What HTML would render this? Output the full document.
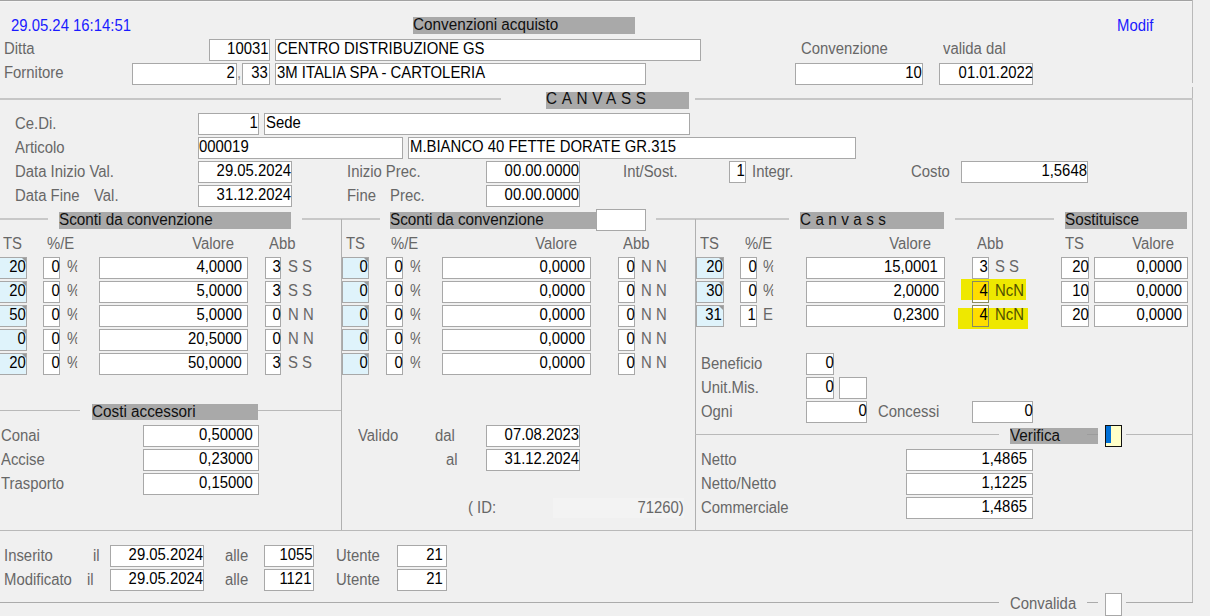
<!DOCTYPE html>
<html><head><meta charset="utf-8"><style>
html,body{margin:0;padding:0;width:1210px;height:616px;overflow:hidden;background:#f0f0f0}
body{position:relative;font-family:"Liberation Sans",sans-serif;font-size:16px}
.t{position:absolute;white-space:pre;line-height:17px;height:17px;transform:scale(0.93,1.0);transform-origin:0 0}
.r{transform-origin:100% 0}
.l{position:absolute}
.b{position:absolute;box-sizing:border-box;border:1px solid #a8a8a8}
.tri{position:absolute;width:0;height:0;border-top:4px solid #9a9a9a;border-left:4px solid transparent}
</style></head><body>
<div id="w" style="position:absolute;left:0;top:0;width:1210px;height:616px">
<div class="l" style="left:0px;top:0px;width:1193px;height:1px;background:#a2a2a2"></div>
<div class="l" style="left:0px;top:1px;width:1192px;height:1px;background:#f6f6f6"></div>
<div class="l" style="left:1192px;top:0px;width:1px;height:83px;background:#b9b9b9"></div>
<div class="l" style="left:1192px;top:87px;width:1px;height:516px;background:#b9b9b9"></div>
<div class="t" style="left:11px;top:17px;color:#1a1aff;">29.05.24 16:14:51</div>
<div class="t" style="left:1117px;top:17px;color:#1a1aff;">Modif</div>
<div class="l" style="left:413px;top:17px;width:222px;height:17px;background:#a9a9a9"></div>
<div class="t" style="left:413px;top:16px;color:#101010;transform:scale(0.955,1);">Convenzioni acquisto</div>
<div class="t" style="left:4px;top:40px;color:#676767;">Ditta</div>
<div class="t" style="left:4px;top:64px;color:#676767;">Fornitore</div>
<div class="b" style="left:209px;top:39px;width:61px;height:22px;background:#fff;border-color:#a8a8a8"></div>
<div class="t r" style="right:942.0px;top:40px;color:#000;">10031</div>
<div class="b" style="left:275px;top:39px;width:426px;height:22px;background:#fff;border-color:#a8a8a8"></div>
<div class="t" style="left:277px;top:40px;color:#000;">CENTRO DISTRIBUZIONE GS</div>
<div class="b" style="left:132px;top:63px;width:105px;height:22px;background:#fff;border-color:#a8a8a8"></div>
<div class="t r" style="right:975px;top:64px;color:#000;">2</div>
<div class="t" style="left:237px;top:64px;color:#888;">,</div>
<div class="b" style="left:242px;top:63px;width:28px;height:22px;background:#fff;border-color:#a8a8a8"></div>
<div class="t r" style="right:942px;top:64px;color:#000;">33</div>
<div class="b" style="left:275px;top:63px;width:371px;height:22px;background:#fff;border-color:#a8a8a8"></div>
<div class="t" style="left:277px;top:64px;color:#000;">3M ITALIA SPA - CARTOLERIA</div>
<div class="t" style="left:801px;top:40px;color:#676767;">Convenzione</div>
<div class="t" style="left:943px;top:40px;color:#676767;">valida dal</div>
<div class="b" style="left:795px;top:63px;width:128px;height:22px;background:#fff;border-color:#a8a8a8"></div>
<div class="t r" style="right:288px;top:64px;color:#000;">10</div>
<div class="b" style="left:939px;top:63px;width:94px;height:22px;background:#fff;border-color:#a8a8a8"></div>
<div class="t r" style="right:177px;top:64px;color:#000;">01.01.2022</div>
<div class="l" style="left:0px;top:98px;width:501px;height:2px;background:#c6c6c6"></div>
<div class="l" style="left:695px;top:98px;width:498px;height:2px;background:#c6c6c6"></div>
<div class="l" style="left:546px;top:92px;width:143px;height:17px;background:#a9a9a9"></div>
<div class="t" style="left:546px;top:90px;color:#101010;transform:scale(0.955,1);letter-spacing:4.9px">CANVASS</div>
<div class="t" style="left:15px;top:115px;color:#676767;">Ce.Di.</div>
<div class="t" style="left:15px;top:139px;color:#676767;">Articolo</div>
<div class="t" style="left:15px;top:163px;color:#676767;">Data Inizio Val.</div>
<div class="t" style="left:15px;top:187px;color:#676767;">Data Fine</div>
<div class="t" style="left:94px;top:187px;color:#676767;">Val.</div>
<div class="b" style="left:198px;top:113px;width:61px;height:22px;background:#fff;border-color:#a8a8a8"></div>
<div class="t r" style="right:952.5px;top:114px;color:#000;">1</div>
<div class="b" style="left:264px;top:113px;width:426px;height:22px;background:#fff;border-color:#a8a8a8"></div>
<div class="t" style="left:266px;top:114px;color:#000;">Sede</div>
<div class="b" style="left:198px;top:137px;width:205px;height:22px;background:#fff;border-color:#a8a8a8"></div>
<div class="t" style="left:199px;top:138px;color:#000;">000019</div>
<div class="b" style="left:408px;top:137px;width:448px;height:22px;background:#fff;border-color:#a8a8a8"></div>
<div class="t" style="left:410px;top:138px;color:#000;">M.BIANCO 40 FETTE DORATE GR.315</div>
<div class="b" style="left:198px;top:161px;width:94px;height:22px;background:#fff;border-color:#a8a8a8"></div>
<div class="t r" style="right:919px;top:162px;color:#000;">29.05.2024</div>
<div class="b" style="left:198px;top:185px;width:94px;height:22px;background:#fff;border-color:#a8a8a8"></div>
<div class="t r" style="right:919px;top:186px;color:#000;">31.12.2024</div>
<div class="t" style="left:347px;top:163px;color:#676767;">Inizio Prec.</div>
<div class="t" style="left:347px;top:187px;color:#676767;">Fine</div>
<div class="t" style="left:390px;top:187px;color:#676767;">Prec.</div>
<div class="b" style="left:486px;top:161px;width:94px;height:22px;background:#fff;border-color:#a8a8a8"></div>
<div class="t r" style="right:631px;top:162px;color:#000;">00.00.0000</div>
<div class="b" style="left:486px;top:185px;width:94px;height:22px;background:#fff;border-color:#a8a8a8"></div>
<div class="t r" style="right:631px;top:186px;color:#000;">00.00.0000</div>
<div class="t" style="left:623px;top:163px;color:#676767;">Int/Sost.</div>
<div class="b" style="left:729px;top:161px;width:17px;height:22px;background:#fff;border-color:#a8a8a8"></div>
<div class="t r" style="right:465.5px;top:162px;color:#000;">1</div>
<div class="t" style="left:752px;top:163px;color:#676767;">Integr.</div>
<div class="t" style="left:911px;top:163px;color:#676767;">Costo</div>
<div class="b" style="left:961px;top:161px;width:127px;height:22px;background:#fff;border-color:#a8a8a8"></div>
<div class="t r" style="right:123px;top:162px;color:#000;">1,5648</div>
<div class="l" style="left:0px;top:218px;width:48px;height:2px;background:#c8c8c8"></div>
<div class="l" style="left:302px;top:218px;width:78px;height:2px;background:#c8c8c8"></div>
<div class="l" style="left:656px;top:218px;width:133px;height:2px;background:#c8c8c8"></div>
<div class="l" style="left:955px;top:218px;width:99px;height:2px;background:#c8c8c8"></div>
<div class="l" style="left:341px;top:219px;width:1px;height:311px;background:#b0b0b0"></div>
<div class="l" style="left:695px;top:219px;width:1px;height:311px;background:#b0b0b0"></div>
<div class="l" style="left:59px;top:212px;width:232px;height:17px;background:#a9a9a9"></div>
<div class="t" style="left:59px;top:211px;color:#101010;transform:scale(0.955,1);">Sconti da convenzione</div>
<div class="l" style="left:390px;top:212px;width:207px;height:17px;background:#a9a9a9"></div>
<div class="t" style="left:390px;top:211px;color:#101010;transform:scale(0.955,1);">Sconti da convenzione</div>
<div class="b" style="left:596px;top:209px;width:50px;height:22px;background:#fff;border-color:#a8a8a8"></div>
<div class="l" style="left:800px;top:212px;width:144px;height:17px;background:#a9a9a9"></div>
<div class="t" style="left:800px;top:211px;color:#101010;transform:scale(0.955,1);letter-spacing:4.6px">Canvass</div>
<div class="l" style="left:1065px;top:212px;width:122px;height:17px;background:#a9a9a9"></div>
<div class="t" style="left:1065px;top:211px;color:#101010;transform:scale(0.955,1);">Sostituisce</div>
<div class="t" style="left:3px;top:235px;color:#676767;">TS</div>
<div class="t" style="left:47px;top:235px;color:#676767;">%/E</div>
<div class="t r" style="right:976px;top:235px;color:#676767;">Valore</div>
<div class="t" style="left:269px;top:235px;color:#676767;">Abb</div>
<div class="t" style="left:346px;top:235px;color:#676767;">TS</div>
<div class="t" style="left:391px;top:235px;color:#676767;">%/E</div>
<div class="t r" style="right:633px;top:235px;color:#676767;">Valore</div>
<div class="t" style="left:623px;top:235px;color:#676767;">Abb</div>
<div class="t" style="left:700px;top:235px;color:#676767;">TS</div>
<div class="t" style="left:745px;top:235px;color:#676767;">%/E</div>
<div class="t r" style="right:279px;top:235px;color:#676767;">Valore</div>
<div class="t" style="left:977px;top:235px;color:#676767;">Abb</div>
<div class="t" style="left:1065px;top:235px;color:#676767;">TS</div>
<div class="t r" style="right:36px;top:235px;color:#676767;">Valore</div>
<div class="b" style="left:-1px;top:257px;width:28px;height:22px;background:#dff3fb;border-color:#a8a8a8"></div>
<div class="tri" style="left:22px;top:258px"></div>
<div class="t r" style="right:1184px;top:258px;color:#000;">20</div>
<div class="b" style="left:43px;top:257px;width:17px;height:22px;background:#fff;border-color:#a8a8a8"></div>
<div class="t r" style="right:1150px;top:258px;color:#000;">0</div>
<div class="t" style="left:67px;top:258px;color:#676767;width:11px;overflow:hidden">%</div>
<div class="b" style="left:99px;top:257px;width:149px;height:22px;background:#fff;border-color:#a8a8a8"></div>
<div class="t r" style="right:968px;top:258px;color:#000;">4,0000</div>
<div class="b" style="left:265px;top:257px;width:16px;height:22px;background:#fff;border-color:#a8a8a8"></div>
<div class="t r" style="right:929px;top:258px;color:#000;">3</div>
<div class="t" style="left:288px;top:258px;color:#676767;">S S</div>
<div class="b" style="left:-1px;top:281px;width:28px;height:22px;background:#dff3fb;border-color:#a8a8a8"></div>
<div class="tri" style="left:22px;top:282px"></div>
<div class="t r" style="right:1184px;top:282px;color:#000;">20</div>
<div class="b" style="left:43px;top:281px;width:17px;height:22px;background:#fff;border-color:#a8a8a8"></div>
<div class="t r" style="right:1150px;top:282px;color:#000;">0</div>
<div class="t" style="left:67px;top:282px;color:#676767;width:11px;overflow:hidden">%</div>
<div class="b" style="left:99px;top:281px;width:149px;height:22px;background:#fff;border-color:#a8a8a8"></div>
<div class="t r" style="right:968px;top:282px;color:#000;">5,0000</div>
<div class="b" style="left:265px;top:281px;width:16px;height:22px;background:#fff;border-color:#a8a8a8"></div>
<div class="t r" style="right:929px;top:282px;color:#000;">3</div>
<div class="t" style="left:288px;top:282px;color:#676767;">S S</div>
<div class="b" style="left:-1px;top:305px;width:28px;height:22px;background:#dff3fb;border-color:#a8a8a8"></div>
<div class="tri" style="left:22px;top:306px"></div>
<div class="t r" style="right:1184px;top:306px;color:#000;">50</div>
<div class="b" style="left:43px;top:305px;width:17px;height:22px;background:#fff;border-color:#a8a8a8"></div>
<div class="t r" style="right:1150px;top:306px;color:#000;">0</div>
<div class="t" style="left:67px;top:306px;color:#676767;width:11px;overflow:hidden">%</div>
<div class="b" style="left:99px;top:305px;width:149px;height:22px;background:#fff;border-color:#a8a8a8"></div>
<div class="t r" style="right:968px;top:306px;color:#000;">5,0000</div>
<div class="b" style="left:265px;top:305px;width:16px;height:22px;background:#fff;border-color:#a8a8a8"></div>
<div class="t r" style="right:929px;top:306px;color:#000;">0</div>
<div class="t" style="left:288px;top:306px;color:#676767;">N N</div>
<div class="b" style="left:-1px;top:329px;width:28px;height:22px;background:#dff3fb;border-color:#a8a8a8"></div>
<div class="tri" style="left:22px;top:330px"></div>
<div class="t r" style="right:1184px;top:330px;color:#000;">0</div>
<div class="b" style="left:43px;top:329px;width:17px;height:22px;background:#fff;border-color:#a8a8a8"></div>
<div class="t r" style="right:1150px;top:330px;color:#000;">0</div>
<div class="t" style="left:67px;top:330px;color:#676767;width:11px;overflow:hidden">%</div>
<div class="b" style="left:99px;top:329px;width:149px;height:22px;background:#fff;border-color:#a8a8a8"></div>
<div class="t r" style="right:968px;top:330px;color:#000;">20,5000</div>
<div class="b" style="left:265px;top:329px;width:16px;height:22px;background:#fff;border-color:#a8a8a8"></div>
<div class="t r" style="right:929px;top:330px;color:#000;">0</div>
<div class="t" style="left:288px;top:330px;color:#676767;">N N</div>
<div class="b" style="left:-1px;top:353px;width:28px;height:22px;background:#dff3fb;border-color:#a8a8a8"></div>
<div class="tri" style="left:22px;top:354px"></div>
<div class="t r" style="right:1184px;top:354px;color:#000;">20</div>
<div class="b" style="left:43px;top:353px;width:17px;height:22px;background:#fff;border-color:#a8a8a8"></div>
<div class="t r" style="right:1150px;top:354px;color:#000;">0</div>
<div class="t" style="left:67px;top:354px;color:#676767;width:11px;overflow:hidden">%</div>
<div class="b" style="left:99px;top:353px;width:149px;height:22px;background:#fff;border-color:#a8a8a8"></div>
<div class="t r" style="right:968px;top:354px;color:#000;">50,0000</div>
<div class="b" style="left:265px;top:353px;width:16px;height:22px;background:#fff;border-color:#a8a8a8"></div>
<div class="t r" style="right:929px;top:354px;color:#000;">3</div>
<div class="t" style="left:288px;top:354px;color:#676767;">S S</div>
<div class="b" style="left:342px;top:257px;width:27px;height:22px;background:#dff3fb;border-color:#a8a8a8"></div>
<div class="tri" style="left:364px;top:258px"></div>
<div class="t r" style="right:842px;top:258px;color:#000;">0</div>
<div class="b" style="left:386px;top:257px;width:17px;height:22px;background:#fff;border-color:#a8a8a8"></div>
<div class="t r" style="right:807px;top:258px;color:#000;">0</div>
<div class="t" style="left:410px;top:258px;color:#676767;width:11px;overflow:hidden">%</div>
<div class="b" style="left:442px;top:257px;width:149px;height:22px;background:#fff;border-color:#a8a8a8"></div>
<div class="t r" style="right:625px;top:258px;color:#000;">0,0000</div>
<div class="b" style="left:618px;top:257px;width:17px;height:22px;background:#fff;border-color:#a8a8a8"></div>
<div class="t r" style="right:575px;top:258px;color:#000;">0</div>
<div class="t" style="left:641px;top:258px;color:#676767;">N N</div>
<div class="b" style="left:342px;top:281px;width:27px;height:22px;background:#dff3fb;border-color:#a8a8a8"></div>
<div class="tri" style="left:364px;top:282px"></div>
<div class="t r" style="right:842px;top:282px;color:#000;">0</div>
<div class="b" style="left:386px;top:281px;width:17px;height:22px;background:#fff;border-color:#a8a8a8"></div>
<div class="t r" style="right:807px;top:282px;color:#000;">0</div>
<div class="t" style="left:410px;top:282px;color:#676767;width:11px;overflow:hidden">%</div>
<div class="b" style="left:442px;top:281px;width:149px;height:22px;background:#fff;border-color:#a8a8a8"></div>
<div class="t r" style="right:625px;top:282px;color:#000;">0,0000</div>
<div class="b" style="left:618px;top:281px;width:17px;height:22px;background:#fff;border-color:#a8a8a8"></div>
<div class="t r" style="right:575px;top:282px;color:#000;">0</div>
<div class="t" style="left:641px;top:282px;color:#676767;">N N</div>
<div class="b" style="left:342px;top:305px;width:27px;height:22px;background:#dff3fb;border-color:#a8a8a8"></div>
<div class="tri" style="left:364px;top:306px"></div>
<div class="t r" style="right:842px;top:306px;color:#000;">0</div>
<div class="b" style="left:386px;top:305px;width:17px;height:22px;background:#fff;border-color:#a8a8a8"></div>
<div class="t r" style="right:807px;top:306px;color:#000;">0</div>
<div class="t" style="left:410px;top:306px;color:#676767;width:11px;overflow:hidden">%</div>
<div class="b" style="left:442px;top:305px;width:149px;height:22px;background:#fff;border-color:#a8a8a8"></div>
<div class="t r" style="right:625px;top:306px;color:#000;">0,0000</div>
<div class="b" style="left:618px;top:305px;width:17px;height:22px;background:#fff;border-color:#a8a8a8"></div>
<div class="t r" style="right:575px;top:306px;color:#000;">0</div>
<div class="t" style="left:641px;top:306px;color:#676767;">N N</div>
<div class="b" style="left:342px;top:329px;width:27px;height:22px;background:#dff3fb;border-color:#a8a8a8"></div>
<div class="tri" style="left:364px;top:330px"></div>
<div class="t r" style="right:842px;top:330px;color:#000;">0</div>
<div class="b" style="left:386px;top:329px;width:17px;height:22px;background:#fff;border-color:#a8a8a8"></div>
<div class="t r" style="right:807px;top:330px;color:#000;">0</div>
<div class="t" style="left:410px;top:330px;color:#676767;width:11px;overflow:hidden">%</div>
<div class="b" style="left:442px;top:329px;width:149px;height:22px;background:#fff;border-color:#a8a8a8"></div>
<div class="t r" style="right:625px;top:330px;color:#000;">0,0000</div>
<div class="b" style="left:618px;top:329px;width:17px;height:22px;background:#fff;border-color:#a8a8a8"></div>
<div class="t r" style="right:575px;top:330px;color:#000;">0</div>
<div class="t" style="left:641px;top:330px;color:#676767;">N N</div>
<div class="b" style="left:342px;top:353px;width:27px;height:22px;background:#dff3fb;border-color:#a8a8a8"></div>
<div class="tri" style="left:364px;top:354px"></div>
<div class="t r" style="right:842px;top:354px;color:#000;">0</div>
<div class="b" style="left:386px;top:353px;width:17px;height:22px;background:#fff;border-color:#a8a8a8"></div>
<div class="t r" style="right:807px;top:354px;color:#000;">0</div>
<div class="t" style="left:410px;top:354px;color:#676767;width:11px;overflow:hidden">%</div>
<div class="b" style="left:442px;top:353px;width:149px;height:22px;background:#fff;border-color:#a8a8a8"></div>
<div class="t r" style="right:625px;top:354px;color:#000;">0,0000</div>
<div class="b" style="left:618px;top:353px;width:17px;height:22px;background:#fff;border-color:#a8a8a8"></div>
<div class="t r" style="right:575px;top:354px;color:#000;">0</div>
<div class="t" style="left:641px;top:354px;color:#676767;">N N</div>
<div class="l" style="left:961px;top:279px;width:65px;height:21px;background:#eee800"></div>
<div class="l" style="left:958px;top:308px;width:70px;height:21px;background:#eee800"></div>
<div class="b" style="left:696px;top:257px;width:28px;height:22px;background:#dff3fb;border-color:#a8a8a8"></div>
<div class="tri" style="left:719px;top:258px"></div>
<div class="t r" style="right:487px;top:258px;color:#000;">20</div>
<div class="b" style="left:740px;top:257px;width:17px;height:22px;background:#fff;border-color:#a8a8a8"></div>
<div class="t r" style="right:453px;top:258px;color:#000;">0</div>
<div class="t" style="left:763px;top:258px;color:#676767;width:11px;overflow:hidden">%</div>
<div class="b" style="left:806px;top:257px;width:139px;height:22px;background:#fff;border-color:#a8a8a8"></div>
<div class="t r" style="right:272.5px;top:258px;color:#000;">15,0001</div>
<div class="b" style="left:972px;top:257px;width:17px;height:22px;background:#fff;border-color:#a8a8a8"></div>
<div class="t r" style="right:222px;top:258px;color:#000;">3</div>
<div class="t" style="left:995px;top:258px;color:#676767;">S S</div>
<div class="b" style="left:1061px;top:257px;width:28px;height:22px;background:#fff;border-color:#a8a8a8"></div>
<div class="t r" style="right:121px;top:258px;color:#000;">20</div>
<div class="b" style="left:1094px;top:257px;width:94px;height:22px;background:#fff;border-color:#a8a8a8"></div>
<div class="t r" style="right:28px;top:258px;color:#000;">0,0000</div>
<div class="b" style="left:696px;top:281px;width:28px;height:22px;background:#dff3fb;border-color:#a8a8a8"></div>
<div class="tri" style="left:719px;top:282px"></div>
<div class="t r" style="right:487px;top:282px;color:#000;">30</div>
<div class="b" style="left:740px;top:281px;width:17px;height:22px;background:#fff;border-color:#a8a8a8"></div>
<div class="t r" style="right:453px;top:282px;color:#000;">0</div>
<div class="t" style="left:763px;top:282px;color:#676767;width:11px;overflow:hidden">%</div>
<div class="b" style="left:806px;top:281px;width:139px;height:22px;background:#fff;border-color:#a8a8a8"></div>
<div class="t r" style="right:271px;top:282px;color:#000;">2,0000</div>
<div class="b" style="left:972px;top:281px;width:17px;height:22px;background:#ffdd00;border-color:#8a8a60"></div>
<div class="t r" style="right:222px;top:282px;color:#000;">4</div>
<div class="t" style="left:995px;top:282px;color:#505000;">NcN</div>
<div class="b" style="left:1061px;top:281px;width:28px;height:22px;background:#fff;border-color:#a8a8a8"></div>
<div class="t r" style="right:121px;top:282px;color:#000;">10</div>
<div class="b" style="left:1094px;top:281px;width:94px;height:22px;background:#fff;border-color:#a8a8a8"></div>
<div class="t r" style="right:28px;top:282px;color:#000;">0,0000</div>
<div class="b" style="left:696px;top:305px;width:28px;height:22px;background:#dff3fb;border-color:#a8a8a8"></div>
<div class="tri" style="left:719px;top:306px"></div>
<div class="t r" style="right:488.5px;top:306px;color:#000;">31</div>
<div class="b" style="left:740px;top:305px;width:17px;height:22px;background:#fff;border-color:#a8a8a8"></div>
<div class="t r" style="right:454.5px;top:306px;color:#000;">1</div>
<div class="t" style="left:763px;top:306px;color:#676767;width:11px;overflow:hidden">E</div>
<div class="b" style="left:806px;top:305px;width:139px;height:22px;background:#fff;border-color:#a8a8a8"></div>
<div class="t r" style="right:271px;top:306px;color:#000;">0,2300</div>
<div class="b" style="left:972px;top:305px;width:17px;height:22px;background:#ffdd00;border-color:#8a8a60"></div>
<div class="t r" style="right:222px;top:306px;color:#000;">4</div>
<div class="t" style="left:995px;top:306px;color:#505000;">NcN</div>
<div class="b" style="left:1061px;top:305px;width:28px;height:22px;background:#fff;border-color:#a8a8a8"></div>
<div class="t r" style="right:121px;top:306px;color:#000;">20</div>
<div class="b" style="left:1094px;top:305px;width:94px;height:22px;background:#fff;border-color:#a8a8a8"></div>
<div class="t r" style="right:28px;top:306px;color:#000;">0,0000</div>
<div class="l" style="left:973px;top:300px;width:15px;height:2px;background:#fff"></div>
<div class="l" style="left:973px;top:306px;width:15px;height:2px;background:#fff"></div>
<div class="t" style="left:701px;top:355px;color:#676767;">Beneficio</div>
<div class="t" style="left:701px;top:379px;color:#676767;">Unit.Mis.</div>
<div class="t" style="left:701px;top:403px;color:#676767;">Ogni</div>
<div class="t" style="left:878px;top:403px;color:#676767;">Concessi</div>
<div class="b" style="left:806px;top:353px;width:28px;height:22px;background:#fff;border-color:#a8a8a8"></div>
<div class="t r" style="right:376px;top:354px;color:#000;">0</div>
<div class="b" style="left:806px;top:377px;width:28px;height:22px;background:#fff;border-color:#a8a8a8"></div>
<div class="t r" style="right:376px;top:378px;color:#000;">0</div>
<div class="b" style="left:839px;top:377px;width:28px;height:22px;background:#fff;border-color:#a8a8a8"></div>
<div class="b" style="left:806px;top:401px;width:61px;height:22px;background:#fff;border-color:#a8a8a8"></div>
<div class="t r" style="right:343px;top:402px;color:#000;">0</div>
<div class="b" style="left:972px;top:401px;width:61px;height:22px;background:#fff;border-color:#a8a8a8"></div>
<div class="t r" style="right:177px;top:402px;color:#000;">0</div>
<div class="l" style="left:695px;top:434px;width:304px;height:1px;background:#b9b9b9"></div>
<div class="l" style="left:1126px;top:434px;width:67px;height:1px;background:#b9b9b9"></div>
<div class="l" style="left:1010px;top:428px;width:88px;height:16px;background:#a9a9a9"></div>
<div class="t" style="left:1010px;top:427px;color:#101010;transform:scale(0.955,1);">Verifica</div>
<div class="l" style="left:1087px;top:434px;width:11px;height:1px;background:#9c9c9c"></div>
<div class="l" style="left:1105px;top:425px;width:17px;height:22px;background:#111"></div>
<div class="l" style="left:1106px;top:426px;width:15px;height:20px;background:#ffffc8"></div>
<div class="l" style="left:1106px;top:426px;width:5px;height:17px;background:#0070d8"></div>
<div class="t" style="left:701px;top:451px;color:#676767;">Netto</div>
<div class="t" style="left:701px;top:475px;color:#676767;">Netto/Netto</div>
<div class="t" style="left:701px;top:499px;color:#676767;">Commerciale</div>
<div class="b" style="left:906px;top:449px;width:127px;height:22px;background:#fff;border-color:#a8a8a8"></div>
<div class="t r" style="right:183px;top:450px;color:#000;">1,4865</div>
<div class="b" style="left:906px;top:473px;width:127px;height:22px;background:#fff;border-color:#a8a8a8"></div>
<div class="t r" style="right:183px;top:474px;color:#000;">1,1225</div>
<div class="b" style="left:906px;top:497px;width:127px;height:22px;background:#fff;border-color:#a8a8a8"></div>
<div class="t r" style="right:183px;top:498px;color:#000;">1,4865</div>
<div class="l" style="left:0px;top:410px;width:80px;height:1px;background:#b9b9b9"></div>
<div class="l" style="left:258px;top:410px;width:83px;height:1px;background:#b9b9b9"></div>
<div class="l" style="left:92px;top:404px;width:166px;height:16px;background:#a9a9a9"></div>
<div class="t" style="left:92px;top:403px;color:#101010;transform:scale(0.955,1);">Costi accessori</div>
<div class="t" style="left:1px;top:427px;color:#676767;">Conai</div>
<div class="t" style="left:1px;top:451px;color:#676767;">Accise</div>
<div class="t" style="left:1px;top:475px;color:#676767;">Trasporto</div>
<div class="b" style="left:143px;top:425px;width:116px;height:22px;background:#fff;border-color:#a8a8a8"></div>
<div class="t r" style="right:957px;top:426px;color:#000;">0,50000</div>
<div class="b" style="left:143px;top:449px;width:116px;height:22px;background:#fff;border-color:#a8a8a8"></div>
<div class="t r" style="right:957px;top:450px;color:#000;">0,23000</div>
<div class="b" style="left:143px;top:473px;width:116px;height:22px;background:#fff;border-color:#a8a8a8"></div>
<div class="t r" style="right:957px;top:474px;color:#000;">0,15000</div>
<div class="t" style="left:358px;top:427px;color:#676767;">Valido</div>
<div class="t" style="left:435px;top:427px;color:#676767;">dal</div>
<div class="t" style="left:446px;top:451px;color:#676767;">al</div>
<div class="b" style="left:486px;top:425px;width:94px;height:22px;background:#fff;border-color:#a8a8a8"></div>
<div class="t r" style="right:631px;top:426px;color:#000;">07.08.2023</div>
<div class="b" style="left:486px;top:449px;width:94px;height:22px;background:#fff;border-color:#a8a8a8"></div>
<div class="t r" style="right:631px;top:450px;color:#000;">31.12.2024</div>
<div class="t" style="left:468px;top:499px;color:#676767;">( ID:</div>
<div class="l" style="left:553px;top:498px;width:131px;height:20px;background:#f3f3f3"></div>
<div class="t r" style="right:526px;top:499px;color:#676767;">71260)</div>
<div class="l" style="left:0px;top:530px;width:1193px;height:1px;background:#b9b9b9"></div>
<div class="t" style="left:4px;top:547px;color:#676767;">Inserito</div>
<div class="t" style="left:93px;top:547px;color:#676767;">il</div>
<div class="t" style="left:4px;top:571px;color:#676767;">Modificato</div>
<div class="t" style="left:87px;top:571px;color:#676767;">il</div>
<div class="b" style="left:110px;top:545px;width:94px;height:22px;background:#fff;border-color:#a8a8a8"></div>
<div class="t r" style="right:1007px;top:546px;color:#000;">29.05.2024</div>
<div class="b" style="left:110px;top:569px;width:94px;height:22px;background:#fff;border-color:#a8a8a8"></div>
<div class="t r" style="right:1007px;top:570px;color:#000;">29.05.2024</div>
<div class="t" style="left:225px;top:547px;color:#676767;">alle</div>
<div class="t" style="left:225px;top:571px;color:#676767;">alle</div>
<div class="b" style="left:264px;top:545px;width:50px;height:22px;background:#fff;border-color:#a8a8a8"></div>
<div class="t r" style="right:897px;top:546px;color:#000;">1055</div>
<div class="b" style="left:264px;top:569px;width:50px;height:22px;background:#fff;border-color:#a8a8a8"></div>
<div class="t r" style="right:898.5px;top:570px;color:#000;">1121</div>
<div class="t" style="left:336px;top:547px;color:#676767;">Utente</div>
<div class="t" style="left:336px;top:571px;color:#676767;">Utente</div>
<div class="b" style="left:397px;top:545px;width:50px;height:22px;background:#fff;border-color:#a8a8a8"></div>
<div class="t r" style="right:767.5px;top:546px;color:#000;">21</div>
<div class="b" style="left:397px;top:569px;width:50px;height:22px;background:#fff;border-color:#a8a8a8"></div>
<div class="t r" style="right:767.5px;top:570px;color:#000;">21</div>
<div class="l" style="left:0px;top:602px;width:999px;height:1px;background:#ababab"></div>
<div class="l" style="left:1087px;top:602px;width:11px;height:1px;background:#ababab"></div>
<div class="l" style="left:1126px;top:602px;width:67px;height:1px;background:#ababab"></div>
<div class="t" style="left:1010px;top:595px;color:#676767;">Convalida</div>
<div class="b" style="left:1105px;top:593px;width:17px;height:23px;background:#fff;border-color:#a8a8a8"></div>
</div>
</body></html>
